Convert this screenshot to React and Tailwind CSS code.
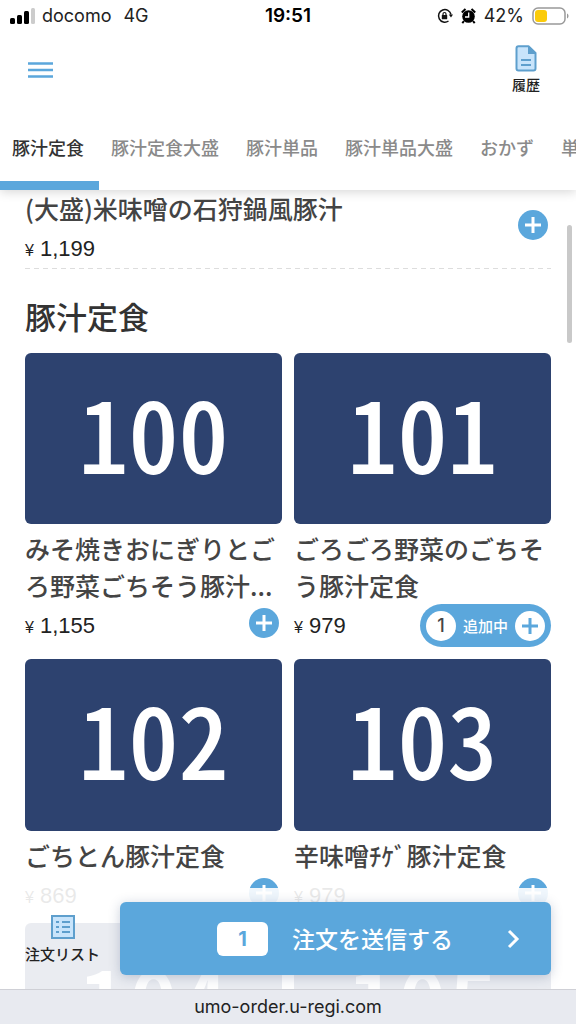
import { useState } from "react";

const tabs = ["豚汁定食", "豚汁定食大盛", "豚汁単品", "豚汁単品大盛", "おかず", "単品"];

const items = [
  { no: 100, name: "みそ焼きおにぎりとごろ野菜ごちそう豚汁...", price: "1,155", count: 0 },
  { no: 101, name: "ごろごろ野菜のごちそう豚汁定食", price: "979", count: 1 },
  { no: 102, name: "ごちとん豚汁定食", price: "869", count: 0 },
  { no: 103, name: "辛味噌ﾁｹﾞ豚汁定食", price: "979", count: 0 },
  { no: 104, name: "豚汁定食", price: "979", count: 0 },
  { no: 105, name: "豚汁定食", price: "979", count: 0 },
];

function Plus() {
  return (
    <svg viewBox="0 0 30 30" className="size-full" fill="none" stroke="currentColor" strokeWidth="3" aria-hidden="true">
      <path d="M15 7v16M7 15h16" />
    </svg>
  );
}

function AddButton({ className = "", label }) {
  return (
    <button aria-label={label} className={`size-[30px] shrink-0 rounded-full bg-[#5ba7dc] text-white ${className}`}>
      <Plus />
    </button>
  );
}

function Price({ value }) {
  return (
    <p className="mt-[10px] font-['Liberation_Sans',sans-serif] text-[22px] leading-6 text-[#222]">
      <span className="mr-[6px] text-base">¥</span>
      {value}
    </p>
  );
}

function StatusBar() {
  return (
    <div className="grid h-8 grid-cols-3 items-center px-[10px] font-['Inter',sans-serif] text-lg leading-8 text-[#222]">
      <div className="flex items-center">
        <svg width="26" height="16" viewBox="0 0 26 16" className="mr-[6px]" aria-hidden="true">
          <rect x="0" y="10" width="5" height="6" rx="1.5" />
          <rect x="7" y="7" width="5" height="9" rx="1.5" />
          <rect x="14" y="3" width="5" height="13" rx="1.5" />
          <rect x="21" y="0" width="4" height="16" rx="1.5" fill="#ccc" />
        </svg>
        <span>docomo</span>
        <span className="ml-3">4G</span>
      </div>
      <span className="text-center text-[19px] font-semibold text-black">19:51</span>
      <div className="flex items-center justify-end gap-2">
        <svg width="16" height="16" viewBox="0 0 16 16" fill="none" stroke="#111" strokeWidth="1.5" aria-hidden="true">
          <path d="M11.5 13A6.3 6.3 0 1 1 14 6.5" />
          <path d="M11.8 6.5H16L14 9.5z" fill="#111" stroke="none" />
          <rect x="4.8" y="7" width="5.4" height="4.3" rx="0.5" fill="#111" stroke="none" />
          <path d="M6 7.500V6a1.5 1.5 0 0 1 3 0v1.500" strokeWidth="1.2" />
        </svg>
        <svg width="15" height="16" viewBox="0 0 15 16" aria-hidden="true">
          <circle cx="7.5" cy="8.5" r="6.3" />
          <path d="M.8 4.500 4.500 1M14.200 4.500 10.500 1M3 13l-1.700 2.200M12 13l1.700 2.200" stroke="#000" strokeWidth="2" />
          <path d="M7.700 4.500V9H4" stroke="#fff" strokeWidth="1.3" fill="none" />
        </svg>
        <span>42%</span>
        <svg width="38" height="18" viewBox="0 0 38 18" className="-mr-1" aria-hidden="true">
          <rect x="1" y="1" width="32" height="16" rx="5" fill="none" stroke="#999" strokeWidth="1.5" />
          <rect x="3" y="3" width="12" height="12" rx="3" fill="#fbcb0a" />
          <path d="M35 6.500c2 .8 2 4.200 0 5z" fill="#999" />
        </svg>
      </div>
    </div>
  );
}

function Header({ active, onSelect }) {
  return (
    <header className="relative z-10 shrink-0 bg-white shadow-[0_2px_10px_rgba(0,0,0,0.16)]">
      <StatusBar />
      <div className="flex h-[74px] items-start justify-between pt-3 pr-9 pl-7">
        <button aria-label="メニュー" className="mt-[17px] text-[#5ba7dc]">
          <svg width="25" height="18" viewBox="0 0 25 18" stroke="currentColor" strokeWidth="2.5" aria-hidden="true">
            <path d="M0 2.500h25M0 9h25M0 15.500h25" />
          </svg>
        </button>
        <button className="flex flex-col items-center gap-[2px] text-sm leading-5 font-medium text-[#222]">
          <svg width="22" height="28" viewBox="0 0 22 28" aria-hidden="true">
            <path
              d="M3.500 2.200h10L20.500 9v15.500q0 2-2 2h-15q-2 0-2-2v-20q0-2.300 2-2.300z"
              fill="#c8e4fb"
              stroke="#5e9fcd"
              strokeWidth="2"
              strokeLinejoin="round"
            />
            <path d="M13 2v8h8z" fill="#5e9fcd" />
            <path d="M6 16h10M6 21h10" stroke="#5e9fcd" strokeWidth="1.8" />
          </svg>
          履歴
        </button>
      </div>
      <nav className="flex overflow-hidden">
        {tabs.map((t) => (
          <button
            key={t}
            onClick={() => onSelect(t)}
            className={`h-[84px] shrink-0 border-b-9 pt-[15px] pr-[15px] pb-[9px] pl-3 text-lg font-medium ${
              t === active ? "border-[#5ba7dc] text-[#333]" : "border-transparent text-[#8a8a8a]"
            }`}
          >
            {t}
          </button>
        ))}
      </nav>
    </header>
  );
}

function Card({ item }) {
  return (
    <li>
      <div className="flex aspect-3/2 items-center justify-center rounded-md bg-[#2d426f] pb-4 text-[100px] leading-none font-medium text-white [font-feature-settings:'hwid']">
        {item.no}
      </div>
      <h3 className="mt-[6px] text-[25px] leading-[37px] font-medium text-[#444]">{item.name}</h3>
      <div className="flex min-h-[37px] items-start justify-between">
        <Price value={item.price} />
        {item.count ? (
          <div className="flex h-[43px] items-center gap-[7px] rounded-full bg-[#5ba7dc] px-[6px] text-[15px] font-medium text-white">
            <span className="flex size-[30px] items-center justify-center rounded-full bg-white font-['Inter',sans-serif] text-lg text-[#444]">
              {item.count}
            </span>
            追加中
            <button aria-label={`${item.name}を追加`} className="size-[30px] rounded-full bg-white text-[#5ba7dc]">
              <Plus />
            </button>
          </div>
        ) : (
          <AddButton label={`${item.name}を追加`} className="mt-1 mr-[3px]" />
        )}
      </div>
    </li>
  );
}

function OrderBar({ count }) {
  return (
    <div className="absolute inset-x-0 bottom-0 flex items-start bg-white/90 px-[25px] py-[14px]">
      <button className="mt-[13px] flex w-[75px] shrink-0 flex-col items-center gap-[5px] text-[15px] leading-5 font-medium whitespace-nowrap text-[#222]">
        <svg width="24" height="24" viewBox="0 0 24 24" stroke="#5e9fcd" strokeWidth="2" aria-hidden="true">
          <rect x="1" y="1" width="22" height="22" fill="#c8e4fb" />
          <path d="M5 7h3M11 7h8M5 12h3M11 12h8M5 17h3M11 17h8" />
        </svg>
        注文リスト
      </button>
      <button className="ml-5 flex h-[73px] flex-1 items-center rounded-md bg-[#5ba7dc] pr-[30px] pl-[97px] text-[23px] font-medium text-white shadow-[0_2px_12px_rgba(45,66,111,0.25)]">
        <span className="flex h-[34px] w-[51px] items-center justify-center rounded-md bg-white font-['Inter',sans-serif] text-xl font-bold text-[#5ba7dc]">
          {count}
        </span>
        <span className="ml-6">注文を送信する</span>
        <svg width="14" height="20" viewBox="0 0 14 20" fill="none" stroke="currentColor" strokeWidth="3" className="ml-auto" aria-hidden="true">
          <path d="m2 2 8 8-8 8" />
        </svg>
      </button>
    </div>
  );
}

export default function App() {
  const [active, setActive] = useState(tabs[0]);
  const count = items.reduce((n, i) => n + i.count, 0);

  return (
    <div className="flex h-screen flex-col overflow-hidden bg-white font-['Noto_Sans_CJK_JP',sans-serif]" lang="ja">
      <Header active={active} onSelect={setActive} />
      <div className="relative min-h-0 flex-1">
        <main className="h-full overflow-y-auto px-[25px] pb-28 [scrollbar-width:none]">
          <section className="flex items-start justify-between">
            <div>
              <h3 className="text-[25px] leading-[37px] font-medium text-[#444]">(大盛)米味噌の石狩鍋風豚汁</h3>
              <Price value="1,199" />
            </div>
            <AddButton label="(大盛)米味噌の石狩鍋風豚汁を追加" className="mt-5 mr-[3px]" />
          </section>
          <div className="mt-[5px] h-px bg-[repeating-linear-gradient(90deg,#ddd_0_5px,transparent_5px_9px)]" />
          <h2 className="mt-6 mb-[14px] text-[31px] leading-[46px] font-medium text-[#333]">豚汁定食</h2>
          <ul className="grid grid-cols-2 gap-3">
            {items.map((item) => (
              <Card key={item.no} item={item} />
            ))}
          </ul>
        </main>
        <div className="absolute top-[35px] right-1 h-[118px] w-[5px] rounded-full bg-[#c9c9c9]" />
        <OrderBar count={count} />
      </div>
      <footer className="shrink-0 border-t border-[#cfd0d6] bg-[#e8eaf0] text-center font-['Inter',sans-serif] text-lg leading-[34px] text-[#222]">
        umo-order.u-regi.com
      </footer>
    </div>
  );
}
